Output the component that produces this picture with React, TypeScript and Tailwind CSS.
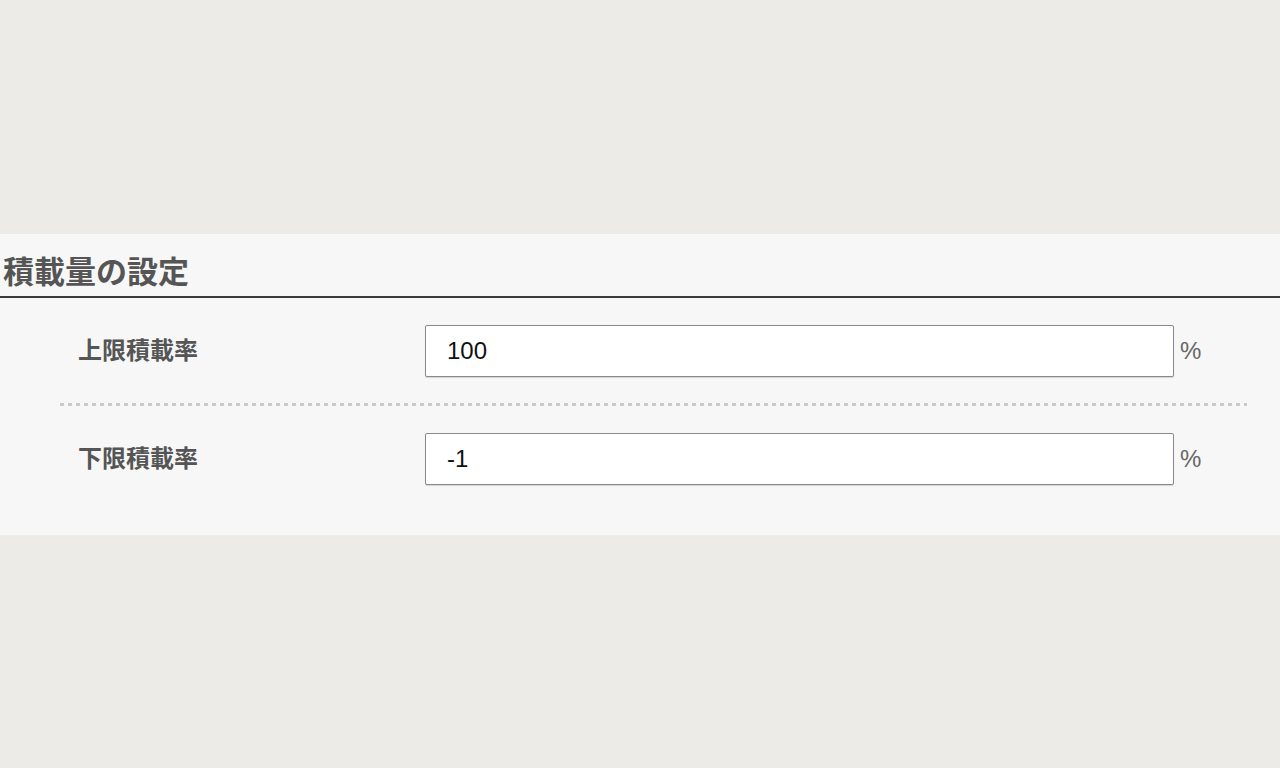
import React from "react";

const font = {
  fontFamily: '"Liberation Sans", Arial, "Noto Sans CJK JP", sans-serif',
};

function Row({ label, value }: { label: string; value: string }) {
  return (
    <div className="flex items-center h-[52px]">
      <div className="w-[365px] pl-[18px] text-[24px] font-bold text-[#555]">{label}</div>
      <input
        readOnly
        value={value}
        className="w-[749px] h-[52px] bg-white border border-[#8a8a8a] rounded-[2px] pl-[21px] text-[24px] text-[#111] outline-none shadow-[0_1px_1px_rgba(0,0,0,0.15)]"
        style={font}
      />
      <span className="ml-[6px] text-[24px] text-[#666]">%</span>
    </div>
  );
}

export default function App() {
  return (
    <div className="min-h-[768px] bg-[#edebe7] pt-[234px]" style={font}>
      <div className="bg-[#f7f7f7] h-[301px]">
        <div className="h-[62px] flex items-center pl-[3px] pt-[14px]">
          <h2 className="text-[31px] font-bold text-[#555] leading-none">積載量の設定</h2>
        </div>
        <div className="h-[2px] bg-[#3a3a3a]" />
        <div className="ml-[60px] w-[1184px] pt-[27px]">
          <Row label="上限積載率" value="100" />
          <div className="mt-[26px] mb-[27px] w-[1187px] h-[3px] bg-[repeating-linear-gradient(to_right,#cacaca_0px,#cacaca_4px,transparent_4px,transparent_8px)]" />
          <Row label="下限積載率" value="-1" />
        </div>
      </div>
    </div>
  );
}
